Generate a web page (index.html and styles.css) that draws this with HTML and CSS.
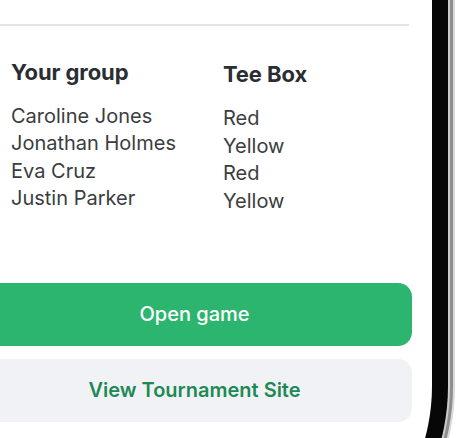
FILE: index.html
```html
<!DOCTYPE html>
<html lang="en">
<head>
<meta charset="utf-8">
<title>Your group</title>
<link rel="stylesheet" href="styles.css">
</head>
<body>
<div class="viewport">
<div class="device">
  <div class="rim">
    <div class="rim-inner">
      <div class="bezel">
        <div class="screen">
          <hr class="divider">
          <section class="group">
            <div class="col col-names">
              <h2 class="heading">Your group</h2>
              <ul class="list">
                <li>Caroline Jones</li>
                <li>Jonathan Holmes</li>
                <li>Eva Cruz</li>
                <li>Justin Parker</li>
              </ul>
            </div>
            <div class="col col-tee">
              <h2 class="heading">Tee Box</h2>
              <ul class="list list-tee">
                <li>Red</li>
                <li>Yellow</li>
                <li>Red</li>
                <li>Yellow</li>
              </ul>
            </div>
          </section>
          <div class="actions">
            <button class="btn btn-primary">Open game</button>
            <button class="btn btn-secondary">View Tournament Site</button>
          </div>
        </div>
      </div>
    </div>
  </div>
</div>
</div>
</body>
</html>
```

FILE: styles.css
```css
html, body {
  margin: 0;
  padding: 0;
  background: #ffffff;
  overflow: hidden;
  width: 460px;
  height: 438px;
}

body {
  font-family: "Inter", "Liberation Sans", sans-serif;
}

.viewport {
  width: 460px;
  height: 438px;
  overflow: hidden;
}

.device {
  width: 498px;
  margin-left: -43px;
  padding: 0 2px 2px 0;
  background: #d9d9d9;
  border-bottom-right-radius: 223px;
  box-sizing: border-box;
}

.rim {
  padding: 0 3px 3px 0;
  background: #8e8e8e;
  border-bottom-right-radius: 221px;
}

.rim-inner {
  padding: 0 2px 2px 0;
  background: #cdcdcd;
  border-bottom-right-radius: 218px;
}

.bezel {
  padding: 0 16px 16px 0;
  background: #070707;
  border-bottom-right-radius: 216px;
}

.screen {
  background: #ffffff;
  height: 586px;
  padding: 24px 20px 0 20px;
  box-sizing: border-box;
  border-bottom-right-radius: 200px;
}

.divider {
  margin: 0 3px 0 0;
  border: 0;
  height: 2px;
  background: #e4e4e4;
}

.group {
  display: grid;
  grid-template-columns: 212px 1fr;
  padding-left: 34px;
  margin-top: 33px;
}

.col-tee {
  padding-top: 2px;
}

.heading {
  margin: 0 0 18px 0;
  font-size: 22px;
  line-height: 26px;
  font-weight: 700;
  color: #2a2e33;
  letter-spacing: -0.1px;
}

.list {
  list-style: none;
  margin: 0;
  padding: 0;
  font-size: 20px;
  line-height: 27.33px;
  color: #3b3d40;
}

.list-tee {
  line-height: 27.67px;
}

.actions {
  display: flex;
  flex-direction: column;
  gap: 13px;
  margin-top: 67px;
}

.btn {
  display: flex;
  align-items: center;
  justify-content: center;
  height: 63px;
  border: 0;
  border-radius: 14px;
  font-family: "Inter", "Liberation Sans", sans-serif;
  font-size: 20px;
  padding: 0;
  width: 100%;
}

.btn-primary {
  background: #2bb56e;
  color: #ffffff;
  font-weight: 500;
}

.btn-secondary {
  background: #f1f2f5;
  color: #1d8a56;
  font-weight: 600;
}
```
